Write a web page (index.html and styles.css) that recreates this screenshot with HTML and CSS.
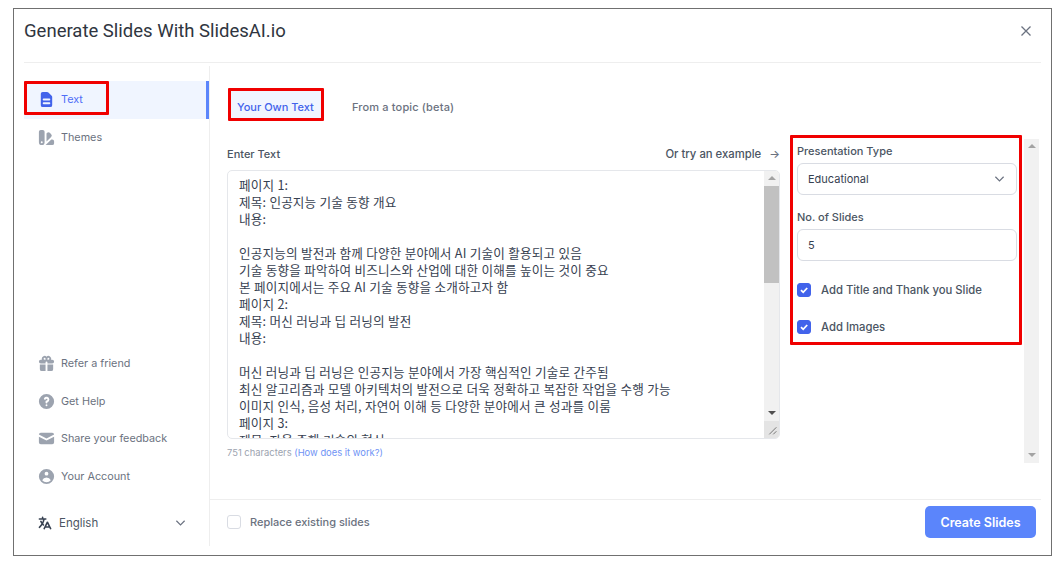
FILE: index.html
```html
<!DOCTYPE html>
<html lang="en">
<head>
    <meta charset="UTF-8">
    <meta name="viewport" content="width=device-width, initial-scale=1.0">
    <title>Generate Slides With SlidesAI.io</title>
    <link rel="stylesheet" href="styles.css">
</head>
<body>
    <div class="dialog">
        <header class="dialog-header">
            <h1>Generate Slides With SlidesAI.io</h1>
            <svg class="close-icon" viewBox="0 0 12 12"><path d="M1.5 1.5l9 9M10.5 1.5l-9 9"/></svg>
        </header>
        <div class="dialog-body">
            <aside class="sidebar">
                <nav class="nav-top">
                    <a class="nav-item active">
                        <svg class="nav-icon" viewBox="0 0 20 20"><path fill-rule="evenodd" d="M4 4a2 2 0 012-2h4.586A2 2 0 0112 2.586L15.414 6A2 2 0 0116 7.414V16a2 2 0 01-2 2H6a2 2 0 01-2-2V4zm2 6a1 1 0 011-1h6a1 1 0 110 2H7a1 1 0 01-1-1zm1 3a1 1 0 100 2h6a1 1 0 100-2H7z"/></svg>
                        <span>Text</span>
                        <span class="mark mark-nav"></span>
                    </a>
                    <a class="nav-item">
                        <svg class="nav-icon" viewBox="0 0 20 20"><path fill-rule="evenodd" d="M4 2a2 2 0 00-2 2v11a3 3 0 106 0V4a2 2 0 00-2-2H4zm1 14a1 1 0 100-2 1 1 0 000 2zm5-1.757l4.9-4.9a2 2 0 000-2.828L13.485 5.1a2 2 0 00-2.828 0L10 5.757v8.486zM16 18H9.071l6-6H16a2 2 0 012 2v2a2 2 0 01-2 2z"/></svg>
                        <span>Themes</span>
                    </a>
                </nav>
                <nav class="nav-bottom">
                    <a class="nav-item">
                        <svg class="nav-icon" viewBox="0 0 20 20"><path fill-rule="evenodd" d="M5 5a3 3 0 015-2.236A3 3 0 0114.83 6H16a2 2 0 110 4h-5V9a1 1 0 10-2 0v1H4a2 2 0 110-4h1.17C5.06 5.687 5 5.35 5 5zm4 1V5a1 1 0 10-1 1h1zm3 0a1 1 0 10-1-1v1h1z"/><path d="M9 11H3v5a2 2 0 002 2h4v-7zM11 18h4a2 2 0 002-2v-5h-6v7z"/></svg>
                        <span>Refer a friend</span>
                    </a>
                    <a class="nav-item">
                        <svg class="nav-icon" viewBox="0 0 20 20"><path fill-rule="evenodd" d="M18 10a8 8 0 11-16 0 8 8 0 0116 0zm-8-3a1 1 0 00-.867.5 1 1 0 11-1.731-1A3 3 0 0113 8a3.001 3.001 0 01-2 2.83V11a1 1 0 11-2 0v-1a1 1 0 011-1 1 1 0 100-2zm0 8a1 1 0 100-2 1 1 0 000 2z"/></svg>
                        <span>Get Help</span>
                    </a>
                    <a class="nav-item">
                        <svg class="nav-icon" viewBox="0 0 20 20"><path d="M2.003 5.884L10 9.882l7.997-3.998A2 2 0 0016 4H4a2 2 0 00-1.997 1.884z"/><path d="M18 8.118l-8 4-8-4V14a2 2 0 002 2h12a2 2 0 002-2V8.118z"/></svg>
                        <span>Share your feedback</span>
                    </a>
                    <a class="nav-item">
                        <svg class="nav-icon" viewBox="0 0 20 20"><path fill-rule="evenodd" d="M18 10a8 8 0 11-16 0 8 8 0 0116 0zm-6-3a2 2 0 11-4 0 2 2 0 014 0zm-2 4a5 5 0 00-4.546 2.916A5.986 5.986 0 0010 16a5.986 5.986 0 004.546-2.084A5 5 0 0010 11z"/></svg>
                        <span>Your Account</span>
                    </a>
                </nav>
                <div class="language">
                    <svg class="lang-icon" viewBox="0 0 20 20"><path fill-rule="evenodd" d="M7 2a1 1 0 011 1v1h3a1 1 0 110 2H9.578a18.87 18.87 0 01-1.724 4.78c.29.354.596.696.914 1.026a1 1 0 11-1.44 1.389c-.188-.196-.373-.396-.554-.6a19.098 19.098 0 01-3.107 3.567 1 1 0 01-1.334-1.49 17.087 17.087 0 003.13-3.733 18.992 18.992 0 01-1.487-2.494 1 1 0 111.79-.89c.234.47.489.928.764 1.372.417-.934.752-1.913.997-2.927H3a1 1 0 110-2h3V3a1 1 0 011-1zm6 6a1 1 0 01.894.553l2.991 5.982a.869.869 0 01.02.037l.99 1.98a1 1 0 11-1.79.895L15.383 16h-4.764l-.724 1.447a1 1 0 11-1.788-.894l.99-1.98.019-.038 2.99-5.982A1 1 0 0113 8zm-1.382 6h2.764L13 11.236 11.618 14z"/></svg>
                    <span class="lang-name">English</span>
                    <svg class="chevron" viewBox="0 0 12 8"><path d="M1.5 1.5L6 6l4.500-4.500"/></svg>
                </div>
            </aside>
            <main class="content">
                <div class="content-top">
                    <div class="tabs">
                        <a class="tab tab-active">Your Own Text</a>
                        <a class="tab tab-plain">From a topic (beta)</a>
                    </div>
                    <div class="columns">
                        <section class="text-col">
                            <div class="text-head">
                                <label class="field-label">Enter Text</label>
                                <a class="example-link">Or try an example <span class="arrow">→</span></a>
                            </div>
                            <div class="text-box">
                                <div class="text-lines">페이지 1:
제목: 인공지능 기술 동향 개요
내용:

인공지능의 발전과 함께 다양한 분야에서 AI 기술이 활용되고 있음
기술 동향을 파악하여 비즈니스와 산업에 대한 이해를 높이는 것이 중요
본 페이지에서는 주요 AI 기술 동향을 소개하고자 함
페이지 2:
제목: 머신 러닝과 딥 러닝의 발전
내용:

머신 러닝과 딥 러닝은 인공지능 분야에서 가장 핵심적인 기술로 간주됨
최신 알고리즘과 모델 아키텍처의 발전으로 더욱 정확하고 복잡한 작업을 수행 가능
이미지 인식, 음성 처리, 자연어 이해 등 다양한 분야에서 큰 성과를 이룸
페이지 3:
제목: 자율 주행 기술의 혁신</div>
                                <div class="scrollbar">
                                    <span class="arrow-up"></span>
                                    <span class="thumb"></span>
                                    <span class="track-fill"></span>
                                    <span class="arrow-down"></span>
                                    <svg class="resizer" viewBox="0 0 17 17"><path d="M6 14l8-8M10.500 14l3.500-3.500"/></svg>
                                </div>
                            </div>
                            <p class="char-count">751 characters <a>(How does it work?)</a></p>
                        </section>
                        <section class="options">
                            <label class="field-label">Presentation Type</label>
                            <div class="input-box">
                                <span>Educational</span>
                                <svg class="chevron" viewBox="0 0 12 8"><path d="M1.500 1.500L6 6l4.500-4.500"/></svg>
                            </div>
                            <label class="field-label slides-label">No. of Slides</label>
                            <div class="input-box"><span>5</span></div>
                            <div class="check-row first-check">
                                <span class="checkbox checked"><svg viewBox="0 0 12 12"><path d="M3 6.200l2.200 2.100L9.200 4"/></svg></span>
                                <span>Add Title and Thank you Slide</span>
                            </div>
                            <div class="check-row">
                                <span class="checkbox checked"><svg viewBox="0 0 12 12"><path d="M3 6.200l2.200 2.100L9.200 4"/></svg></span>
                                <span>Add Images</span>
                            </div>
                        </section>
                        <div class="outer-scroll">
                            <span class="arrow-up"></span>
                            <span class="arrow-down"></span>
                        </div>
                    </div>
                </div>
                <footer class="content-foot">
                    <div class="replace">
                        <span class="checkbox"></span>
                        <span>Replace existing slides</span>
                    </div>
                    <button class="create-button">Create Slides</button>
                </footer>
            </main>
        </div>
    </div>
</body>
</html>
```

FILE: styles.css
```css
* {
    box-sizing: border-box;
}

body {
    margin: 0;
    background: #fff;
    font-family: Inter, "Noto Sans CJK KR", sans-serif;
    font-size: 11px;
    color: #374151;
}

.dialog {
    width: 1039px;
    height: 548px;
    margin: 8px 0 0 13px;
    padding: 0 10px;
    border: 1.5px solid #707070;
    background: #fff;
}

.dialog-header {
    display: flex;
    justify-content: space-between;
    align-items: center;
    height: 54px;
    padding: 0 9px 10px 0;
    border-bottom: 1px solid #eeeeee;
}

.dialog-header h1 {
    margin: 0;
    font-family: Roboto, sans-serif;
    font-size: 18.5px;
    font-weight: 400;
    color: #2f3540;
}

.close-icon {
    width: 12px;
    height: 12px;
    fill: none;
    stroke: #6b7280;
    stroke-width: 1.3;
}

.dialog-body {
    display: flex;
    height: 480px;
    margin-top: 3px;
}

.sidebar {
    display: flex;
    flex-direction: column;
    width: 186px;
    padding-top: 15px;
    border-right: 1px solid #eeeeee;
}

.nav-bottom {
    margin-top: auto;
}

.nav-item {
    position: relative;
    display: flex;
    align-items: center;
    gap: 5.500px;
    height: 37.500px;
    padding-left: 12.500px;
    color: #6b7280;
    font-size: 10.800px;
}

.nav-icon {
    width: 19px;
    height: 19px;
    fill: #9ca3af;
}

.nav-item.active {
    background: #f0f5ff;
    border-right: 3px solid #5b85fb;
    color: #4f6ef7;
}

.nav-item.active .nav-icon {
    fill: #4263eb;
}

/* red annotation drawn on top of the screenshot */
.mark {
    position: absolute;
}

.mark-nav {
    top: 0;
    left: 0;
    width: 85px;
    height: 34px;
    border: 3px solid #f00000;
    border-radius: 1px;
}

.language {
    display: flex;
    align-items: center;
    height: 46px;
    margin-top: 5px;
    padding: 0 23px 0 13px;
    font-size: 11.500px;
    color: #4b5563;
}

.lang-icon {
    width: 16px;
    height: 16px;
    fill: #374151;
}

.lang-name {
    flex: 1;
    margin-left: 6px;
}

.chevron {
    width: 11px;
    height: 8px;
    fill: none;
    stroke: #6b7280;
    stroke-width: 1.300;
}

.content {
    display: flex;
    flex-direction: column;
    flex: 1;
}

.content-top {
    flex: 1;
    padding: 22px 0 0 17px;
    border-bottom: 1px solid #eeeeee;
}

.tabs {
    display: flex;
    align-items: center;
    gap: 28px;
    height: 33px;
    margin-left: 1px;
}

.tab {
    display: flex;
    align-items: center;
    height: 33px;
    padding-top: 4px;
    font-weight: 500;
    color: #6b7280;
}

.tab-plain {
    letter-spacing: 0.150px;
}

.tab-active {
    width: 96px;
    padding-left: 6px;
    border: 3px solid #f00000;
    border-radius: 1px;
    background: #f0f5ff;
    color: #4263eb;
}

.columns {
    display: flex;
    margin-top: 15px;
}

.text-col {
    width: 553px;
    padding-top: 11px;
}

.text-head {
    display: flex;
    justify-content: space-between;
    align-items: center;
    height: 14px;
    margin-bottom: 9px;
}

.field-label {
    font-weight: 500;
    color: #4b5563;
}

.example-link {
    font-size: 11.300px;
    font-weight: 500;
    color: #4b5563;
}

.arrow {
    margin-left: 5px;
    color: #6b7280;
}

.text-box {
    display: flex;
    height: 269px;
    border: 1px solid #e5e7eb;
    border-radius: 5px;
    overflow: hidden;
}

.text-lines {
    flex: 1;
    padding: 4.500px 11px;
    overflow: hidden;
    font-family: "Noto Sans CJK KR", sans-serif;
    font-size: 12.600px;
    line-height: 17px;
    letter-spacing: 0.150px;
    word-spacing: 0.300px;
    white-space: pre;
    color: #374151;
}

.scrollbar {
    display: flex;
    flex-direction: column;
    align-items: stretch;
    width: 15px;
    background: #f1f1f1;
}

.arrow-up,
.arrow-down {
    flex: none;
    width: 0;
    height: 0;
    margin: 5px auto 6px;
    border-left: 4px solid transparent;
    border-right: 4px solid transparent;
}

.arrow-up {
    border-bottom: 4px solid #a3a3a3;
}

.arrow-down {
    border-top: 4px solid #505050;
}

.thumb {
    flex: none;
    height: 97px;
    background: #c1c1c1;
}

.track-fill {
    flex: 1;
}

.resizer {
    flex: none;
    width: 15px;
    height: 17px;
    background: #e4e4e4;
    fill: none;
    stroke: #666;
    stroke-width: 1;
}

.char-count {
    margin: 8px 0 0;
    font-size: 9.400px;
    color: #9ca3af;
}

.char-count a {
    color: #6f93f5;
}

.options {
    width: 232px;
    height: 210px;
    margin: -1px 0 0 10px;
    padding: 6px 2px 0 4px;
    border: 3px solid #f00000;
    border-radius: 1px;
}

.input-box {
    display: flex;
    justify-content: space-between;
    align-items: center;
    height: 32px;
    margin-top: 5px;
    padding: 0 11px 0 10px;
    border: 1px solid #d9dce3;
    border-radius: 6px;
    color: #374151;
}

.slides-label {
    display: block;
    margin-top: 15px;
}

.options .field-label {
    display: block;
    line-height: 14px;
}

.check-row {
    display: flex;
    align-items: center;
    gap: 10px;
    height: 14px;
    margin-top: 23px;
    font-size: 11.300px;
    font-weight: 500;
    color: #4b5563;
}

.first-check {
    margin-top: 22px;
}

.checkbox {
    display: flex;
    width: 14px;
    height: 14px;
    border: 1px solid #d9dce3;
    border-radius: 3px;
    background: #fff;
}

.checkbox.checked {
    border-color: #4263eb;
    background: #4263eb;
}

.checkbox svg {
    fill: none;
    stroke: #fff;
    stroke-width: 1.800;
}

.outer-scroll {
    display: flex;
    flex-direction: column;
    justify-content: space-between;
    width: 15px;
    height: 324px;
    margin: 3px 0 0 2px;
    background: #f1f1f1;
}

.outer-scroll .arrow-down {
    border-top-color: #a3a3a3;
}

.content-foot {
    display: flex;
    justify-content: space-between;
    align-items: center;
    height: 46px;
    padding: 0 5px 2px 17px;
}

.replace {
    display: flex;
    align-items: center;
    gap: 9px;
    font-weight: 500;
    color: #6b7280;
}

.create-button {
    width: 111px;
    height: 32px;
    border: none;
    border-radius: 5px;
    background: #5b85fb;
    color: #fff;
    font-family: Inter, sans-serif;
    font-size: 12.500px;
    font-weight: 600;
}
```
